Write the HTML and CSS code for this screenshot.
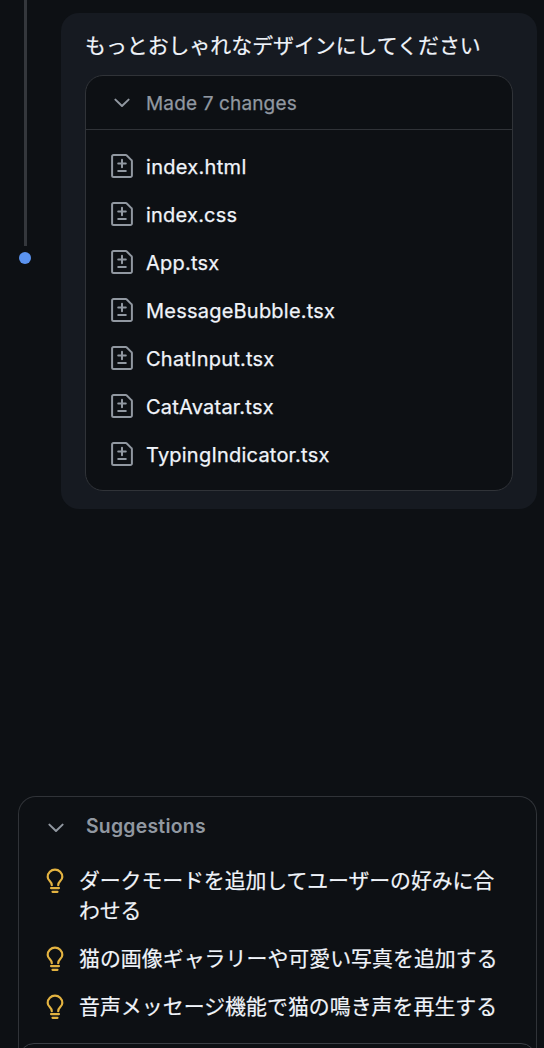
FILE: index.html
```html
<!DOCTYPE html>
<html lang="ja">
<head>
<meta charset="utf-8">
<title>Chat</title>
<link rel="stylesheet" href="styles.css">
</head>
<body>
<svg class="defs" width="0" height="0">
  <symbol id="file" viewBox="0 0 24 24"><path d="M3.6 1.1H15.8a1.5 1.5 0 0 1 1 .4L21.4 6.1a1.5 1.5 0 0 1 .5 1.1V21.4a1.5 1.5 0 0 1-1.5 1.5H3.6a1.5 1.5 0 0 1-1.5-1.5V2.6a1.5 1.5 0 0 1 1.5-1.5Z M12 5.8v7.4M8.2 9.5h7.6M8.2 16.9h7.6"/></symbol>
  <symbol id="bulb" viewBox="0 0 20 26"><path d="M6.8 17.2C6.8 13.2 2.7 13 2.7 8.9a7.3 7.3 0 0 1 14.6 0c0 4.1-4.1 4.3-4.1 8.3M6 20.1h8M7.5 23.8h5"/></symbol>
  <symbol id="chevron" viewBox="0 0 16 10"><path d="m1.4 1.6 6.6 6.4 6.6-6.4"/></symbol>
</svg>
<div class="app">
  <section class="history">
    <div class="timeline"><div class="line"></div><div class="dot"></div></div>
    <article class="message">
      <p class="prompt">もっとおしゃれなデザインにしてください</p>
      <div class="changes">
        <div class="changes-head"><svg class="chevron"><use href="#chevron"/></svg><span>Made 7 changes</span></div>
        <ul class="files">
          <li><svg class="file"><use href="#file"/></svg><span class="wide">index.html</span></li>
          <li><svg class="file"><use href="#file"/></svg><span>index.css</span></li>
          <li><svg class="file"><use href="#file"/></svg><span>App.tsx</span></li>
          <li><svg class="file"><use href="#file"/></svg><span>MessageBubble.tsx</span></li>
          <li><svg class="file"><use href="#file"/></svg><span>ChatInput.tsx</span></li>
          <li><svg class="file"><use href="#file"/></svg><span>CatAvatar.tsx</span></li>
          <li><svg class="file"><use href="#file"/></svg><span>TypingIndicator.tsx</span></li>
        </ul>
      </div>
    </article>
  </section>
  <section class="suggestions">
    <div class="suggestions-head"><svg class="chevron"><use href="#chevron"/></svg><h2>Suggestions</h2></div>
    <ul class="ideas">
      <li><svg class="bulb"><use href="#bulb"/></svg><span class="tight">ダークモードを追加してユーザーの好みに合わせる</span></li>
      <li><svg class="bulb"><use href="#bulb"/></svg><span>猫の画像ギャラリーや可愛い写真を追加する</span></li>
      <li><svg class="bulb"><use href="#bulb"/></svg><span>音声メッセージ機能で猫の鳴き声を再生する</span></li>
    </ul>
    <div class="composer"></div>
  </section>
</div>
</body>
</html>
```
FILE: styles.css
```css
* { box-sizing: border-box; }
body {
  margin: 0;
  background: #0d1014;
  color: #f0f4fa;
  font-family: Inter, "Noto Sans CJK JP", sans-serif;
  font-size: 20px;
}
ul, p, h2 { margin: 0; padding: 0; list-style: none; }
svg { flex: none; fill: none; stroke: #9198a1; stroke-width: 2; stroke-linecap: round; stroke-linejoin: round; }
.defs { position: absolute; }
.app {
  height: 1048px;
  overflow: hidden;
  display: flex;
  flex-direction: column;
  justify-content: space-between;
}
.history { display: flex; }
.timeline {
  width: 61px;
  padding-left: 19px;
}
.line { width: 3px; height: 246px; margin-left: 5px; background: #34373c; }
.dot { width: 12px; height: 12px; margin-top: 6px; border-radius: 50%; background: #5b93ef; }
.message {
  width: 476px;
  height: 496px;
  margin-top: 13px;
  padding: 18px 24px 0;
  border-radius: 18px;
  background: #161a21;
}
.prompt {
  height: 44px;
  line-height: 30px;
  font-size: 20.9px;
  white-space: nowrap;
  -webkit-text-stroke: 0.2px currentColor;
}
.changes {
  height: 416px;
  border: 1px solid #303338;
  border-radius: 18px;
  background: #0d1014;
}
.changes-head {
  height: 54px;
  padding-left: 28px;
  display: flex;
  align-items: center;
  gap: 16px;
  border-bottom: 1px solid #303338;
  color: #9198a1;
  font-size: 19px;
  letter-spacing: 0.15px;
  -webkit-text-stroke: 0.25px currentColor;
}
.changes-head .chevron { margin-top: 1px; }
.changes-head span { padding-top: 2px; }
.chevron { width: 16px; height: 10px; }
.files { padding: 12px 0 0 24px; }
.files li { height: 48px; display: flex; align-items: center; gap: 12px; }
.files span { padding-top: 2px; letter-spacing: 0.22px; -webkit-text-stroke: 0.25px currentColor; }
.files .wide { letter-spacing: 0.3px; }
.file { width: 24px; height: 24px; }
.suggestions {
  width: 519px;
  height: 252px;
  margin-left: 18px;
  border: 1px solid #303338;
  border-bottom: 0;
  border-radius: 18px 18px 0 0;
}
.suggestions-head {
  height: 60px;
  padding-left: 29px;
  display: flex;
  align-items: center;
  gap: 22px;
  color: #9198a1;
}
.suggestions-head .chevron { margin-top: 2px; }
h2 { padding-bottom: 2px; font-size: 19.4px; font-weight: 600; letter-spacing: 0.25px; }
.ideas {
  height: 186px;
  padding: 9px 24px 0 26px;
  display: flex;
  flex-direction: column;
  gap: 18px;
  font-size: 20.9px;
  line-height: 30px;
}
.ideas li { display: flex; gap: 14px; }
.ideas span { width: 430px; letter-spacing: 0.04px; -webkit-text-stroke: 0.2px currentColor; }
.ideas .tight { letter-spacing: -0.08px; }
.bulb { width: 20px; height: 26px; margin-top: 2px; stroke: #e3b341; stroke-width: 2.2; }
.composer { height: 30px; border: 1px solid #3b3f45; border-radius: 18px; }
```
